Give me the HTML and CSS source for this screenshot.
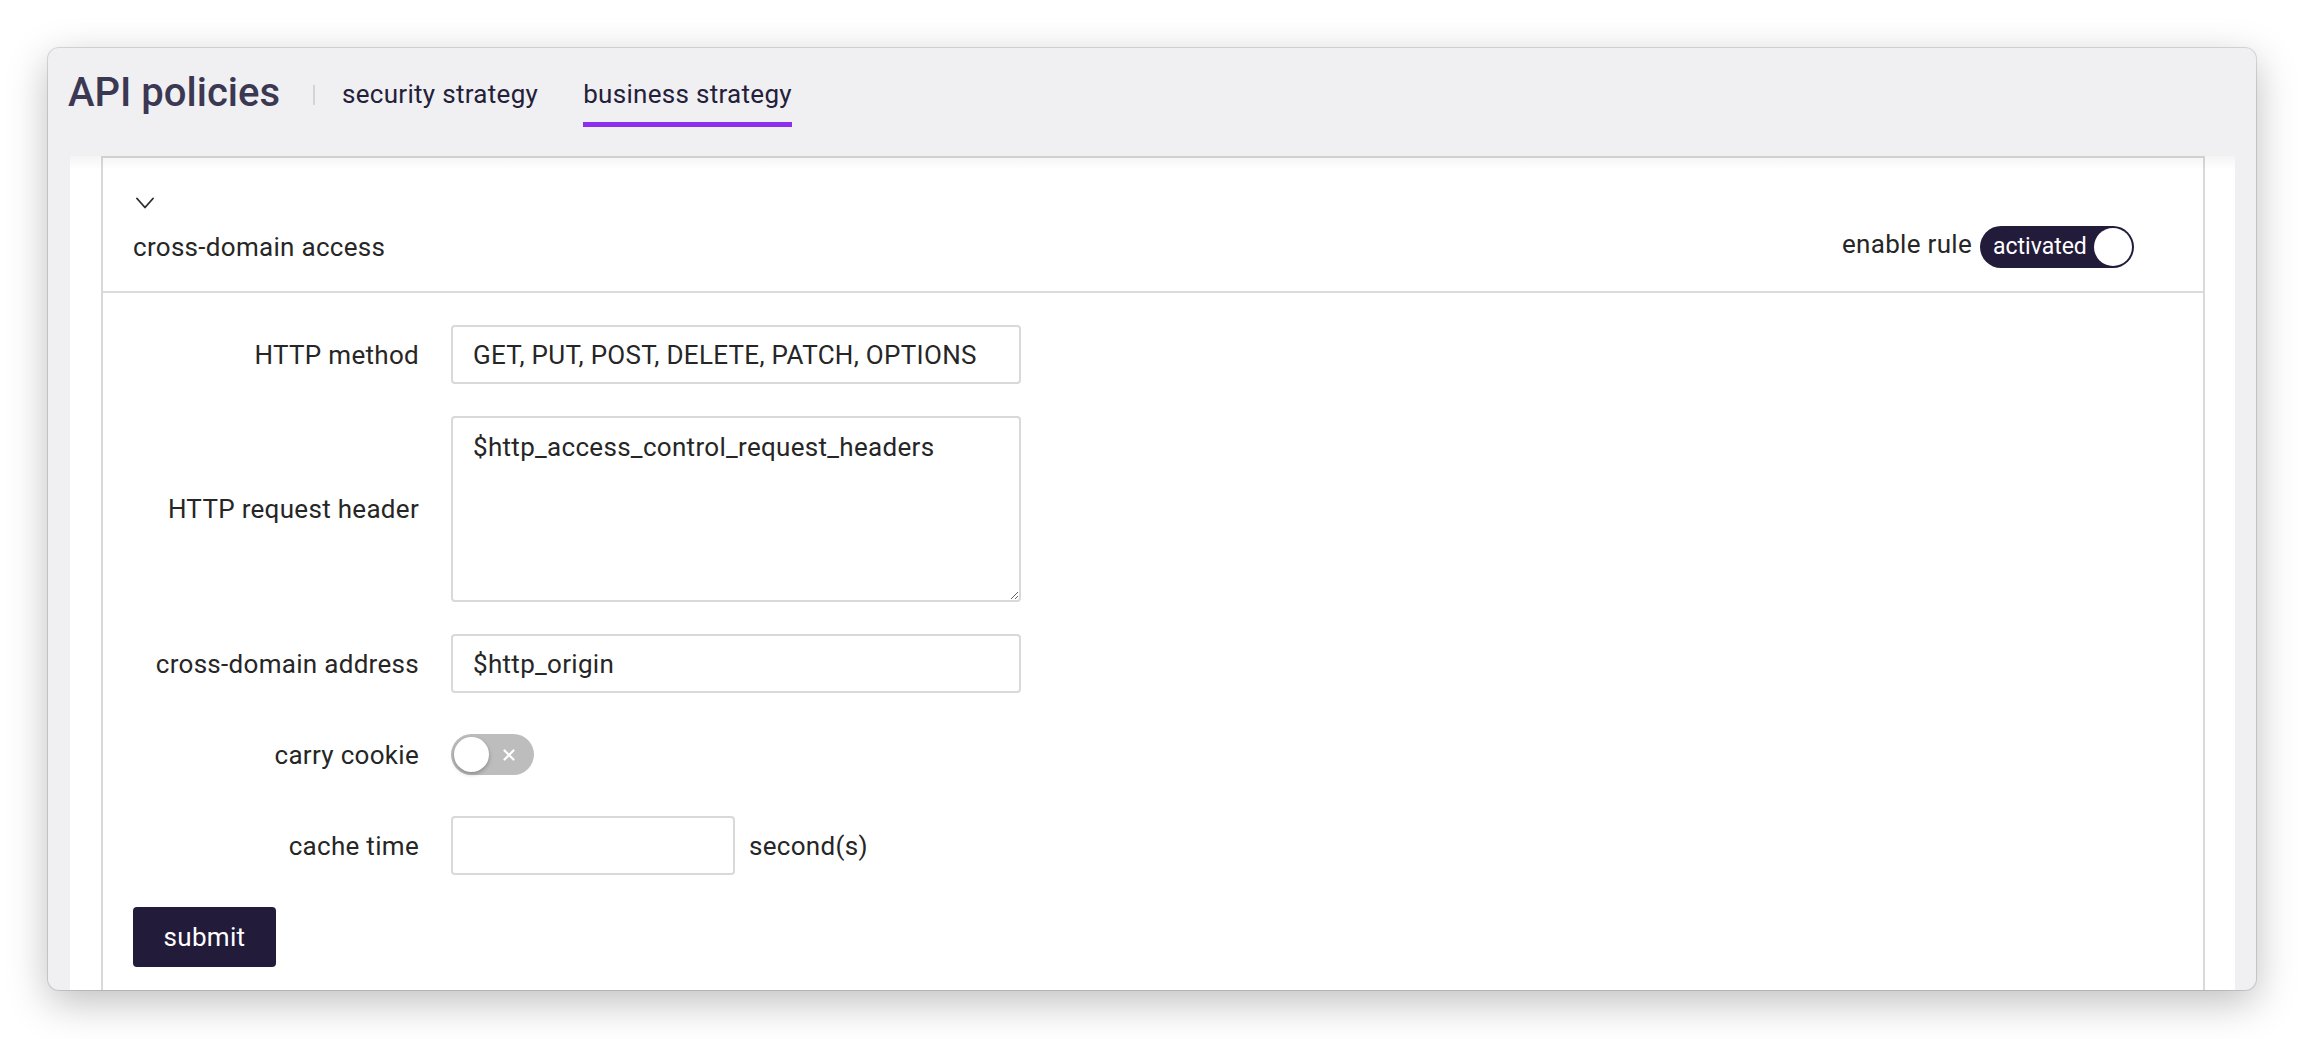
FILE: index.html
```html
<!DOCTYPE html>
<html lang="en">
<head>
<meta charset="utf-8">
<title>API policies</title>
<link rel="stylesheet" href="styles.css">
</head>
<body>
<div class="page">
  <div class="window">
    <header class="topbar">
      <h1 class="title">API policies</h1>
      <span class="sep"></span>
      <nav class="tabs">
        <a class="tab">security strategy</a>
        <a class="tab active">business strategy</a>
      </nav>
    </header>
    <main class="content">
      <section class="card">
        <div class="card-head">
          <div class="head-left">
            <svg class="chevron" width="18" height="12" viewBox="0 0 18 12"><polyline points="1,1.5 9,10.5 17,1.5" fill="none" stroke="#2b2b2b" stroke-width="1.8" stroke-linecap="round" stroke-linejoin="round"/></svg>
            <div class="card-title">cross-domain access</div>
          </div>
          <div class="head-right">
            <span class="enable-label">enable rule</span>
            <span class="switch on"><span class="switch-text">activated</span><span class="knob"></span></span>
          </div>
        </div>
        <form class="form">
          <div class="row">
            <label class="label">HTTP method</label>
            <div class="control"><input class="input" type="text" value="GET, PUT, POST, DELETE, PATCH, OPTIONS"></div>
          </div>
          <div class="row">
            <label class="label">HTTP request header</label>
            <div class="control"><textarea class="textarea">$http_access_control_request_headers</textarea></div>
          </div>
          <div class="row">
            <label class="label">cross-domain address</label>
            <div class="control"><input class="input" type="text" value="$http_origin"></div>
          </div>
          <div class="row">
            <label class="label">carry cookie</label>
            <div class="control">
              <span class="switch off"><span class="knob"></span>
                <svg class="x" width="12" height="12" viewBox="0 0 12 12"><path d="M1.5 1.5 L10.5 10.5 M10.5 1.5 L1.5 10.5" stroke="#fff" stroke-width="2.2" stroke-linecap="round"/></svg>
              </span>
            </div>
          </div>
          <div class="row">
            <label class="label">cache time</label>
            <div class="control"><input class="input short" type="text" value=""><span class="unit">second(s)</span></div>
          </div>
          <div class="actions">
            <button type="button" class="submit">submit</button>
          </div>
        </form>
      </section>
    </main>
  </div>
</div>
</body>
</html>
```

FILE: styles.css
```css
* { box-sizing: border-box; }
html, body { margin: 0; padding: 0; background: #ffffff; }
body {
  font-family: Roboto, "Liberation Sans", Arial, sans-serif;
  color: #262626;
  width: 2304px;
  height: 1039px;
  overflow: hidden;
}
.page { padding: 48px 48px 0 48px; }
.window {
  height: 942px;
  border-radius: 11px;
  background: #f0f0f2;
  box-shadow: 0 0 0 1px rgba(0,0,0,0.13), 0 12px 40px rgba(0,0,0,0.26);
  overflow: hidden;
  display: flex;
  flex-direction: column;
}
.topbar {
  height: 108px;
  flex: none;
  display: flex;
  align-items: flex-start;
  padding: 21px 0 0 20px;
}
.title {
  margin: 0;
  font-size: 40px;
  line-height: 48px;
  font-weight: 500;
  color: #3b3853;
}
.sep {
  width: 2px;
  height: 20px;
  background: #d3d3d8;
  margin: 16px 27px 0 33px;
}
.tabs { display: flex; margin-top: 9px; gap: 45px; }
.tab {
  font-size: 26px;
  line-height: 32px;
  letter-spacing: 0.3px;
  color: #24203a;
  padding-bottom: 12px;
  border-bottom: 5px solid transparent;
}
.tab.active { border-bottom-color: #8b30ef; }
.content {
  flex: 1;
  margin: 0 21px 0 22px;
  background: #ffffff;
  padding: 0 30px 0 31px;
  overflow: hidden;
  position: relative;
}
.content::before {
  content: "";
  position: absolute;
  left: 0; right: 0; top: 0;
  height: 14px;
  background: linear-gradient(rgba(0,0,0,0.045), rgba(0,0,0,0));
  pointer-events: none;
  z-index: 2;
}
.card {
  border: 2px solid #d9d9d9;
  background: #ffffff;
}
.card-head {
  display: flex;
  justify-content: space-between;
  padding: 32px 69px 24px 30px;
  border-bottom: 2px solid #dcdcdc;
}
.chevron { display: block; margin: 7px 0 0 3px; }
.card-title {
  margin-top: 18px;
  font-size: 26px;
  line-height: 40px;
  letter-spacing: 0.3px;
  color: #262626;
}
.head-left { display: flex; flex-direction: column; }
.head-right {
  align-self: flex-end;
  height: 40px;
  display: flex;
  align-items: center;
  gap: 8px;
}
.enable-label { font-size: 26px; line-height: 40px; letter-spacing: 0.3px; color: #262626; margin-top: -6px; }
.switch {
  position: relative;
  display: inline-flex;
  align-items: center;
  border-radius: 21px;
}
.switch.on {
  height: 42px;
  width: 154px;
  background: #221b3a;
  padding-left: 13px;
}
.switch-text { color: #ffffff; font-size: 23px; line-height: 42px; }
.switch.on .knob {
  position: absolute;
  right: 2px; top: 2px;
  width: 38px; height: 38px;
  border-radius: 50%;
  background: #ffffff;
}
.switch.off {
  height: 41px;
  width: 83px;
  background: #bdbdbd;
}
.switch.off .knob {
  position: absolute;
  left: 3px; top: 3px;
  width: 35px; height: 35px;
  border-radius: 50%;
  background: #ffffff;
  box-shadow: 0 2px 4px rgba(0,0,0,0.28);
}
.switch.off .x { position: absolute; left: 52px; top: 14.5px; }
.form {
  display: flex;
  flex-direction: column;
  gap: 32px;
  padding: 32px 30px 40px 30px;
}
.row {
  display: grid;
  grid-template-columns: 286px 1fr;
  column-gap: 32px;
  align-items: center;
}
.label {
  text-align: right;
  font-size: 26px;
  line-height: 36px;
  letter-spacing: 0.3px;
  color: #262626;
}
.control { display: flex; align-items: center; min-height: 59px; }
.input, .textarea {
  font-family: Roboto, "Liberation Sans", Arial, sans-serif;
  font-size: 26px;
  letter-spacing: 0.3px;
  color: #262626;
  border: 2px solid #d9d9d9;
  border-radius: 4px;
  background: #ffffff;
  outline: none;
}
.input {
  width: 570px;
  height: 59px;
  padding: 0 20px;
}
.input.short { width: 284px; }
.textarea {
  width: 570px;
  height: 186px;
  padding: 11px 20px;
  line-height: 36px;
  resize: both;
  display: block;
}
.unit { margin-left: 14px; font-size: 26px; letter-spacing: 0.3px; color: #262626; }
.actions { display: flex; }
.submit {
  height: 60px;
  width: 143px;
  padding: 0;
  background: #221b3a;
  color: #ffffff;
  border: none;
  border-radius: 4px;
  font-family: Roboto, "Liberation Sans", Arial, sans-serif;
  font-size: 26px;
  letter-spacing: 0.3px;
}
```
